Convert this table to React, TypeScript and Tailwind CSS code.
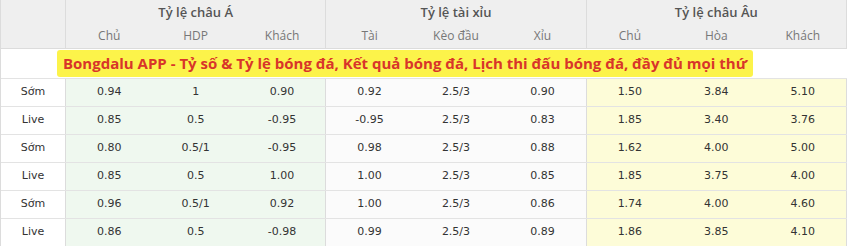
import { FC } from 'react'

interface OddsRow {
  label: string
  asia: string[]
  tx: string[]
  eu: string[]
}

const rows: OddsRow[] = [
  { label: 'Sớm', asia: ['0.94', '1', '0.90'], tx: ['0.92', '2.5/3', '0.90'], eu: ['1.50', '3.84', '5.10'] },
  { label: 'Live', asia: ['0.85', '0.5', '-0.95'], tx: ['-0.95', '2.5/3', '0.83'], eu: ['1.85', '3.40', '3.76'] },
  { label: 'Sớm', asia: ['0.80', '0.5/1', '-0.95'], tx: ['0.98', '2.5/3', '0.88'], eu: ['1.62', '4.00', '5.00'] },
  { label: 'Live', asia: ['0.85', '0.5', '1.00'], tx: ['1.00', '2.5/3', '0.85'], eu: ['1.85', '3.75', '4.00'] },
  { label: 'Sớm', asia: ['0.96', '0.5/1', '0.92'], tx: ['1.00', '2.5/3', '0.86'], eu: ['1.74', '4.00', '4.60'] },
  { label: 'Live', asia: ['0.86', '0.5', '-0.98'], tx: ['0.99', '2.5/3', '0.89'], eu: ['1.86', '3.85', '4.10'] }
]

const groups = [
  { title: 'Tỷ lệ châu Á', cols: ['Chủ', 'HDP', 'Khách'] },
  { title: 'Tỷ lệ tài xỉu', cols: ['Tài', 'Kèo đầu', 'Xỉu'] },
  { title: 'Tỷ lệ châu Âu', cols: ['Chủ', 'Hòa', 'Khách'] }
]

const Cells: FC<{ values: string[]; bg: string }> = ({ values, bg }) => (
  <div className={`grid grid-cols-3 border-r border-[#dcdcdc] ${bg}`}>
    {values.map((v, i) => (
      <div key={i} className="flex items-center justify-center">
        {v}
      </div>
    ))}
  </div>
)

const App: FC = () => {
  return (
    <div className="h-[246px] w-[850px] overflow-hidden bg-white font-['DejaVu_Sans',sans-serif] text-[11px] text-[#333]">
      <div className="w-[847px] border-l border-[#dcdcdc]">
        {/* header */}
        <div className="grid grid-cols-[65px_1fr_1fr_1fr] bg-[#efefef] text-[#777]">
          <div className="border-r border-[#dcdcdc]" />
          {groups.map((g) => (
            <div key={g.title} className="border-r border-[#dcdcdc]">
              <div className="flex h-[24px] items-center justify-center pt-[2px] font-['Open_Sans',sans-serif] text-[13px] font-semibold text-[#555]">
                {g.title}
              </div>
              <div className="grid h-[24px] grid-cols-3 font-['Open_Sans',sans-serif] text-[12px]">
                {g.cols.map((c, i) => (
                  <div key={i} className="flex items-center justify-center">
                    {c}
                  </div>
                ))}
              </div>
            </div>
          ))}
        </div>

        {/* banner */}
        <div className="flex h-[30px] items-center border-t border-[#dcdcdc] pl-[56px]">
          <span className="rounded-[3px] bg-[#fcf34a] px-[6px] py-[3px] font-['Open_Sans',sans-serif] text-[15px] leading-[21px] font-bold text-[#d8352a]">
            Bongdalu APP - Tỷ số &amp; Tỷ lệ bóng đá, Kết quả bóng đá, Lịch thi đấu bóng đá, đầy đủ mọi thứ
          </span>
        </div>

        {/* data */}
        {rows.map((r, idx) => (
          <div key={idx} className="grid h-[28px] grid-cols-[65px_1fr_1fr_1fr] border-t border-[#e3e3e3]">
            <div className="flex items-center justify-center border-r border-[#dcdcdc]">{r.label}</div>
            <Cells values={r.asia} bg="bg-[#eff8ef]" />
            <Cells values={r.tx} bg="bg-[#fbfbfb]" />
            <Cells values={r.eu} bg="bg-[#fdfcd8]" />
          </div>
        ))}
      </div>
    </div>
  )
}

export default App
